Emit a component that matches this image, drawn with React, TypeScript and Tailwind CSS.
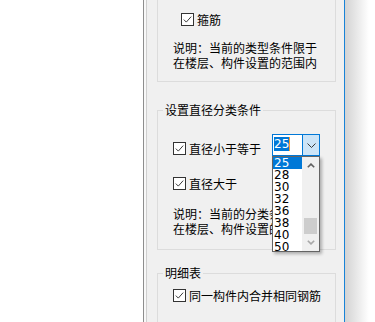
import React from "react";

function Check() {
  return (
    <span className="block w-[13px] h-[13px] border border-[#333333] bg-white shrink-0">
      <svg width="11" height="11" viewBox="0 0 11 11" className="block">
        <path d="M1.8 5.6 L4.3 8.1 L9.2 2.6" fill="none" stroke="#3c3c3c" strokeWidth="1" />
      </svg>
    </span>
  );
}

function Label({ text }: { text: string }) {
  return (
    <div className="flex items-center h-[13px] gap-[3px]">
      <Check />
      <span className="whitespace-nowrap leading-[14px]">{text}</span>
    </div>
  );
}

const items = ["25", "28", "30", "32", "36", "38", "40", "50"];

function Combo() {
  return (
    <div className="relative w-[48px] h-[22px] shrink-0">
      <div className="flex w-full h-full border border-[#0078d7]">
        <div className="w-[29px] bg-white pl-[1px] pt-[2px] flex items-start">
          <span className="bg-[#0078d7] text-white font-['DejaVu_Sans',sans-serif] text-[12px] leading-[14px] px-[0px]">25</span>
          <span className="w-[1px] h-[14px] bg-[#f59a2e]" />
        </div>
        <div className="w-[17px] border-l border-[#0078d7] bg-[#cce4f7] flex items-center justify-center">
          <svg width="9" height="5" viewBox="0 0 9 5" className="block">
            <path d="M0.5 0.5 L4.5 4.5 L8.5 0.5" fill="none" stroke="#3a3a3a" strokeWidth="1" />
          </svg>
        </div>
      </div>
      <div className="absolute left-0 top-full z-10 w-[48px] h-[96px] border border-[#646464] bg-white shadow-[2px_2px_3px_rgba(0,0,0,0.28)] flex overflow-hidden">
        <div className="w-[29px] flex flex-col font-['DejaVu_Sans',sans-serif] text-[12px]">
          {items.map((v, i) => (
            <div
              key={v}
              className={
                i === 0
                  ? "h-[12px] shrink-0 leading-[12px] pl-[1px] bg-[#0078d7] text-white"
                  : "h-[12px] shrink-0 leading-[12px] pl-[1px] text-black"
              }
            >
              {v}
            </div>
          ))}
        </div>
        <div className="w-[17px] bg-[#f0f0f0] flex flex-col">
          <div className="h-[17px] shrink-0 flex items-center justify-center">
            <svg width="8" height="5" viewBox="0 0 8 5" className="block">
              <path d="M0.8 4.3 L4 1.1 L7.2 4.3" fill="none" stroke="#606060" strokeWidth="1.6" />
            </svg>
          </div>
          <div className="h-[60px] shrink-0 flex flex-col justify-end">
            <div className="mx-[2px] h-[16px] bg-[#cdcdcd]" />
          </div>
          <div className="h-[17px] shrink-0 flex items-center justify-center">
            <svg width="8" height="5" viewBox="0 0 8 5" className="block">
              <path d="M0.8 0.7 L4 3.9 L7.2 0.7" fill="none" stroke="#a8a8a8" strokeWidth="1.6" />
            </svg>
          </div>
        </div>
      </div>
    </div>
  );
}

export default function App() {
  return (
    <div className="w-[375px] h-[322px] overflow-hidden bg-white flex font-['Noto_Sans_CJK_SC','Noto_Sans',sans-serif] text-[12px] leading-[14px] text-black">
      <div className="w-[143px] shrink-0" />
      <div className="w-[202px] shrink-0 h-full flex bg-[#f0f0f0] border-l border-l-[#8e8e8e] border-r border-r-[#1883d7]">
        <div className="w-[2px] shrink-0 bg-[#f8f8f8]" />
        <div className="w-[1px] shrink-0 bg-[#cfcfcf]" />
        <div className="flex-1 pl-[10px] pr-[8px] flex flex-col">
          {/* group 1 (top cut off) */}
          <div className="h-[82px] shrink-0 border-x border-b border-[#dcdcdc]">
            <div className="pt-[13px] pl-[23px]">
              <Label text="箍筋" />
            </div>
            <div className="mt-[14px] pl-[15px] leading-[15px] whitespace-nowrap">
              <div>说明：当前的类型条件限于</div>
              <div>在楼层、构件设置的范围内</div>
            </div>
          </div>

          {/* group 2 */}
          <fieldset className="mt-[21px] shrink-0 border border-[#dcdcdc] pb-[13px]">
            <legend className="ml-[5px] px-[2px] leading-[14px]">设置直径分类条件</legend>
            <div className="pt-[17px] flex items-start">
              <div className="w-[114px] pl-[15px] pt-[8px] shrink-0">
                <Label text="直径小于等于" />
              </div>
              <Combo />
            </div>
            <div className="mt-[21px] pl-[15px]">
              <Label text="直径大于" />
            </div>
            <div className="mt-[16px] pl-[15px] leading-[15px] whitespace-nowrap">
              <div>说明：当前的分类条件限于</div>
              <div>在楼层、构件设置的范围内</div>
            </div>
          </fieldset>

          {/* group 3 */}
          <fieldset className="mt-[16px] shrink-0 border border-[#dcdcdc] h-[90px]">
            <legend className="ml-[5px] px-[2px] leading-[14px]">明细表</legend>
            <div className="pt-[9px] pl-[15px]">
              <Label text="同一构件内合并相同钢筋" />
            </div>
          </fieldset>
        </div>
      </div>
      <div className="w-[24px] shrink-0 h-full bg-linear-to-r from-[#d3d3d3] to-white" />
    </div>
  );
}
